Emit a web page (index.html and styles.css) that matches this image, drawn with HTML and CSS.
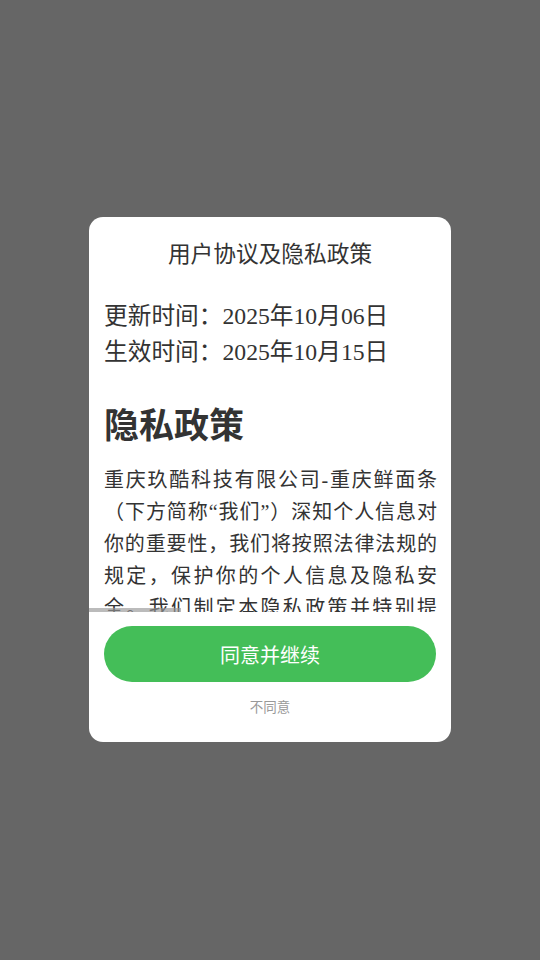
FILE: index.html
```html
<!DOCTYPE html>
<html lang="zh-CN">
<head>
<meta charset="utf-8">
<title>用户协议及隐私政策</title>
<link rel="stylesheet" href="styles.css">
</head>
<body>
<div class="screen">
  <div class="modal">
    <div class="title">用户协议及隐私政策</div>
    <div class="scroll">
      <div class="dates">
        <div>更新时间：2025年10月06日</div>
        <div>生效时间：2025年10月15日</div>
      </div>
      <h1 class="heading">隐私政策</h1>
      <p class="body-text">重庆玖酷科技有限公司-重庆鲜面条（下方简称“我们”）深知个人信息对你的重要性，我们将按照法律法规的规定，保护你的个人信息及隐私安全。我们制定本隐私政策并特别提醒：在使用我们的产品与服务前，请你仔细阅读并充分理解本政策。</p>
      <div class="vthumb"></div>
      <div class="hbar"></div>
    </div>
    <div class="actions">
      <button class="agree">同意并继续</button>
      <button class="disagree">不同意</button>
    </div>
  </div>
</div>
</body>
</html>
```
FILE: styles.css
```css
html, body {
  margin: 0;
  padding: 0;
  background: #666666;
}
.screen {
  width: 540px;
  height: 960px;
  display: flex;
  justify-content: center;
  padding-top: 217px;
  box-sizing: border-box;
}
.modal {
  width: 362px;
  height: 525px;
  background: #ffffff;
  border-radius: 14px;
  display: flex;
  flex-direction: column;
  overflow: hidden;
}
.title {
  height: 73px;
  line-height: 71px;
  text-align: center;
  font-family: "Noto Sans CJK SC", sans-serif;
  font-size: 22.7px;
  color: #333333;
}
.scroll {
  position: relative;
  height: 322px;
  overflow: hidden;
  padding: 0 14px 0 15px;
}
.dates {
  margin-top: 8px;
  font-family: "Liberation Serif", "Noto Sans CJK SC", serif;
  font-size: 23.7px;
  line-height: 36px;
  color: #333333;
}
.heading {
  margin: 31px 0 0 0;
  font-family: "Noto Sans CJK SC", sans-serif;
  font-size: 35px;
  line-height: 44px;
  font-weight: 700;
  color: #333333;
}
.body-text {
  margin: 19px 0 0 0;
  font-family: "Liberation Serif", "Noto Sans CJK SC", serif;
  font-size: 20px;
  line-height: 32px;
  text-align: justify;
  color: #333333;
}
.vthumb {
  position: absolute;
  right: 0;
  top: -15px;
  width: 5px;
  height: 10px;
  background: #b0b0b0;
}
.hbar {
  position: absolute;
  left: 0;
  bottom: 0;
  width: 92px;
  height: 4px;
  background: rgba(150, 150, 150, 0.65);
}
.actions {
  display: flex;
  flex-direction: column;
  align-items: center;
  padding-top: 14px;
}
.agree {
  width: 332px;
  height: 56px;
  border: none;
  border-radius: 28px;
  background: #44be58;
  color: #ffffff;
  font-family: "Noto Sans CJK SC", sans-serif;
  font-size: 20px;
  padding: 0;
}
.disagree {
  margin-top: 12px;
  border: none;
  background: transparent;
  color: #999999;
  font-family: "Noto Sans CJK SC", sans-serif;
  font-size: 13.5px;
  line-height: 24px;
  padding: 0;
}
```
